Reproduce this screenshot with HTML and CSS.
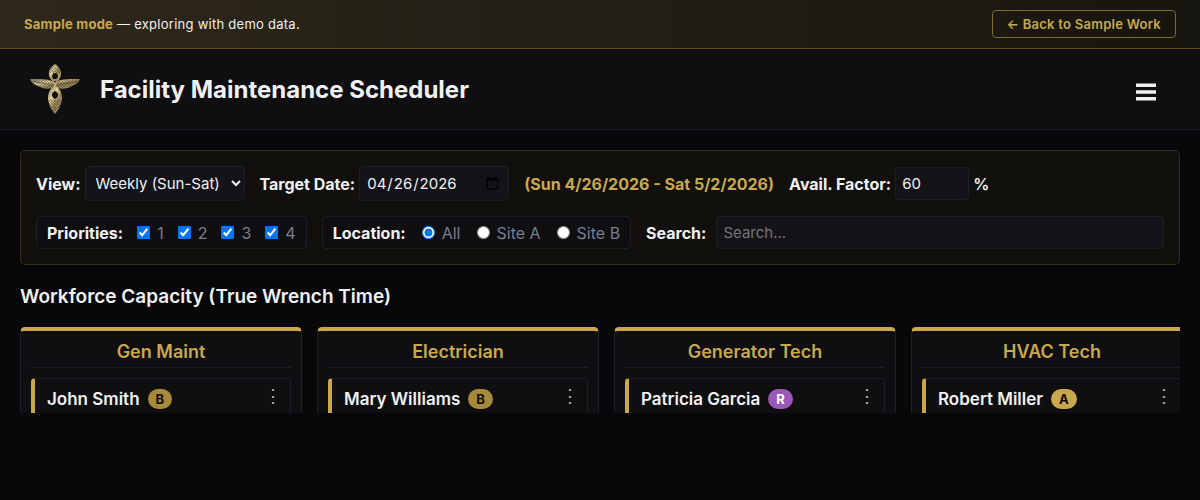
FILE: index.html
```html
<!DOCTYPE html>
<html lang="en">
<head>
    <meta charset="UTF-8">
    <meta name="viewport" content="width=device-width, initial-scale=1.0">
    <title>Facility Maintenance Scheduler</title>
    <link rel="stylesheet" href="styles.css">
</head>
<body>
    <div class="demo-banner">
        <span><strong>Sample mode</strong> — exploring with demo data.</span>
        <a href="#" class="back-link">← Back to Sample Work</a>
    </div>

    <header class="app-header">
        <div class="brand">
            <svg class="logo" viewBox="0 0 60 60" aria-hidden="true">
                <defs>
                    <linearGradient id="metal" x1="0" y1="0" x2="1" y2="1">
                        <stop offset="0" stop-color="#8d8778"/>
                        <stop offset="0.35" stop-color="#e0cf9c"/>
                        <stop offset="0.6" stop-color="#96804d"/>
                        <stop offset="1" stop-color="#b5ab95"/>
                    </linearGradient>
                    <pattern id="feather" width="3" height="3" patternUnits="userSpaceOnUse">
                        <path d="M0 0L3 3M3 0L0 3" stroke="#1d1b18" stroke-width="0.6" opacity="0.5"/>
                    </pattern>
                </defs>
                <g fill="url(#metal)">
                    <path d="M5 20C14 20 22 20 27 22L30 24L33 22C38 20 46 20 55 20C53 25 49 26 45 28C41 30 36 30 33 29L30 27L27 29C24 30 19 30 15 28C11 26 7 25 5 20Z"/>
                    <path fill-rule="evenodd" d="M30 5C33 7 36 10 36 14C36 18 35 20 32 22H28C25 20 24 18 24 14C24 10 27 7 30 5ZM30 14C27 14 26 19 29 20H31C34 19 33 14 30 14Z"/>
                    <path fill-rule="evenodd" d="M28 28H32C36 31 37 35 37 40C36 46 33 52 30 55C27 52 24 46 23 40C23 35 24 31 28 28ZM30 32C26 34 26 38 30 40C34 38 34 34 30 32Z"/>
                </g>
                <g fill="url(#feather)">
                    <path d="M5 20C14 20 22 20 27 22L30 24L33 22C38 20 46 20 55 20C53 25 49 26 45 28C41 30 36 30 33 29L30 27L27 29C24 30 19 30 15 28C11 26 7 25 5 20Z"/>
                    <path d="M30 5C33 7 36 10 36 14L32 14H28L24 14C24 10 27 7 30 5Z"/>
                    <path d="M23 40L30 41L37 40C36 46 33 52 30 55C27 52 24 46 23 40Z"/>
                </g>
                <path d="M8 22C16 24 22 25 28 26M52 22C44 24 38 25 32 26" fill="none" stroke="#50452c" stroke-width="0.7"/>
                <path d="M26 20C28 22 32 24 30 31M34 20C32 22 28 24 30 31" fill="none" stroke="#c4b180" stroke-width="1"/>
            </svg>
            <h1>Facility Maintenance Scheduler</h1>
        </div>
        <button class="menu-btn" type="button" aria-label="Menu">
            <svg viewBox="0 0 20 18" width="20" height="18" aria-hidden="true">
                <path d="M0 0.4h20v3.6H0zM0 7.2h20v3.6H0zM0 14h20v3.6H0z" fill="currentColor"/>
            </svg>
        </button>
    </header>

    <main>
        <form class="controls">
            <div class="controls-row">
                <div class="field">
                    <label for="view">View:</label>
                    <select id="view" class="view-select">
                        <option>Weekly (Sun-Sat)</option>
                        <option>Daily</option>
                    </select>
                </div>
                <div class="field">
                    <label for="target-date">Target Date:</label>
                    <input type="date" id="target-date" class="date-input" value="2026-04-26">
                </div>
                <span class="date-range">(Sun 4/26/2026 - Sat 5/2/2026)</span>
                <div class="field">
                    <label for="factor">Avail. Factor:</label>
                    <input type="number" id="factor" class="factor-input" value="60">
                    <span class="unit">%</span>
                </div>
            </div>
            <div class="controls-row">
                <div class="group" role="group" aria-labelledby="prio-label">
                    <span class="group-label" id="prio-label">Priorities:</span>
                    <label><input type="checkbox" checked>1</label>
                    <label><input type="checkbox" checked>2</label>
                    <label><input type="checkbox" checked>3</label>
                    <label><input type="checkbox" checked>4</label>
                </div>
                <div class="group" role="radiogroup" aria-labelledby="loc-label">
                    <span class="group-label" id="loc-label">Location:</span>
                    <label><input type="radio" name="location" checked>All</label>
                    <label><input type="radio" name="location">Site A</label>
                    <label><input type="radio" name="location">Site B</label>
                </div>
                <div class="field search">
                    <label for="search">Search:</label>
                    <input type="text" id="search" placeholder="Search...">
                </div>
            </div>
        </form>

        <h2>Workforce Capacity (True Wrench Time)</h2>
        <div class="capacity">
            <section class="craft">
                <h3>Gen Maint</h3>
                <div class="person">
                    <span class="name">John Smith</span>
                    <span class="badge shift-b">B</span>
                    <button class="more" type="button" aria-label="Options">⋮</button>
                </div>
            </section>
            <section class="craft">
                <h3>Electrician</h3>
                <div class="person">
                    <span class="name">Mary Williams</span>
                    <span class="badge shift-b">B</span>
                    <button class="more" type="button" aria-label="Options">⋮</button>
                </div>
            </section>
            <section class="craft">
                <h3>Generator Tech</h3>
                <div class="person">
                    <span class="name">Patricia Garcia</span>
                    <span class="badge shift-r">R</span>
                    <button class="more" type="button" aria-label="Options">⋮</button>
                </div>
            </section>
            <section class="craft">
                <h3>HVAC Tech</h3>
                <div class="person">
                    <span class="name">Robert Miller</span>
                    <span class="badge shift-a">A</span>
                    <button class="more" type="button" aria-label="Options">⋮</button>
                </div>
            </section>
        </div>
    </main>
</body>
</html>
```

FILE: styles.css
```css
:root {
    --gold: #c9a84c;
    --text: #f0f0f2;
    --muted: #7a7d90;
    --line: #1e1e26;
    --panel: #0f0f11;
    --input: #141418;
}

* {
    margin: 0;
    padding: 0;
    box-sizing: border-box;
}

body {
    background: #08080a;
    color: var(--text);
    font-family: Inter, sans-serif;
    font-size: 16px;
    min-height: 100vh;
    overflow: hidden;
}

.demo-banner {
    display: flex;
    align-items: center;
    justify-content: space-between;
    padding: 10px 24px;
    background: linear-gradient(90deg, #2e281a, #17150f);
    border-bottom: 1px solid #5e4d26;
    font-size: 13px;
    letter-spacing: 0.02em;
}

.demo-banner strong {
    color: var(--gold);
    font-weight: 700;
}

.back-link {
    padding: 5px 14px;
    border: 1px solid #7b6732;
    border-radius: 4px;
    color: var(--gold);
    font-weight: 600;
    line-height: 16px;
    text-decoration: none;
}

.app-header {
    display: flex;
    align-items: center;
    justify-content: space-between;
    padding: 10px 44px 10px 25px;
    background: var(--panel);
    border-bottom: 1px solid var(--line);
}

.brand {
    display: flex;
    align-items: center;
    gap: 15px;
}

.logo {
    width: 60px;
    height: 60px;
}

h1 {
    font-size: 24px;
    font-weight: 700;
}

.menu-btn {
    display: flex;
    padding: 6px 0 0;
    background: none;
    border: none;
    color: var(--text);
    cursor: pointer;
}

main {
    padding: 20px;
}

.controls {
    display: flex;
    flex-direction: column;
    gap: 15px;
    padding: 15px;
    background: #11100d;
    border: 1px solid #322b18;
    border-radius: 5px;
    font-weight: 700;
}

.controls-row,
.field {
    display: flex;
    align-items: center;
}

.controls-row {
    gap: 15px;
}

.field {
    gap: 4px;
}

.controls select,
.field input {
    padding: 6px;
    background: var(--input);
    border: 1px solid var(--line);
    border-radius: 4px;
    color: var(--text);
    font-family: inherit;
    font-size: 15px;
}

.view-select,
.date-input {
    height: 35px;
}

.view-select {
    width: 160px;
}

.date-input {
    width: 150px;
}

.factor-input,
.search input {
    height: 33px;
}

.factor-input {
    width: 74px;
}

.date-range {
    color: var(--gold);
}

.unit {
    font-weight: 600;
}

.group {
    display: flex;
    align-items: center;
    gap: 14px;
    height: 33px;
    padding: 0 10px;
    background: var(--panel);
    border: 1px solid var(--line);
    border-radius: 4px;
}

.group label {
    display: flex;
    align-items: center;
    gap: 7px;
    color: var(--muted);
    font-weight: 400;
}

.group input[type="radio"] {
    margin-left: 2px;
}

.search {
    flex: 1;
    gap: 10px;
}

.search input {
    flex: 1;
}

h2 {
    margin: 20px 0 18px;
    font-size: 19px;
    font-weight: 600;
    line-height: 24px;
}

.capacity {
    display: flex;
    align-items: flex-start;
    gap: 15px;
    max-height: 86px;
    overflow: hidden;
}

.craft {
    flex: 0 0 282px;
    padding: 10px;
    background: var(--panel);
    border: 1px solid var(--line);
    border-top: 4px solid var(--gold);
    border-radius: 5px;
}

h3 {
    margin-bottom: 10px;
    padding-bottom: 4px;
    border-bottom: 1px solid var(--line);
    color: var(--gold);
    font-size: 18px;
    font-weight: 600;
    line-height: 22px;
    text-align: center;
}

.person {
    display: flex;
    align-items: flex-start;
    gap: 8px;
    padding: 10px 8px 20px 12px;
    border: 1px solid var(--line);
    border-left: 4px solid var(--gold);
    border-radius: 4px;
}

.name {
    font-size: 17px;
    font-weight: 600;
    line-height: 20px;
}

.badge {
    padding: 0 8px;
    border-radius: 10px;
    color: #0a0a0c;
    font-size: 13px;
    font-weight: 700;
    line-height: 20px;
}

.shift-a {
    background: var(--gold);
}

.shift-b {
    background: #a68a3a;
}

.shift-r {
    background: #9b59b6;
    color: #fff;
}

.more {
    margin-left: auto;
    background: none;
    border: none;
    color: #b4b4bc;
    font-family: inherit;
    font-size: 18px;
    line-height: 14px;
    cursor: pointer;
}
```
